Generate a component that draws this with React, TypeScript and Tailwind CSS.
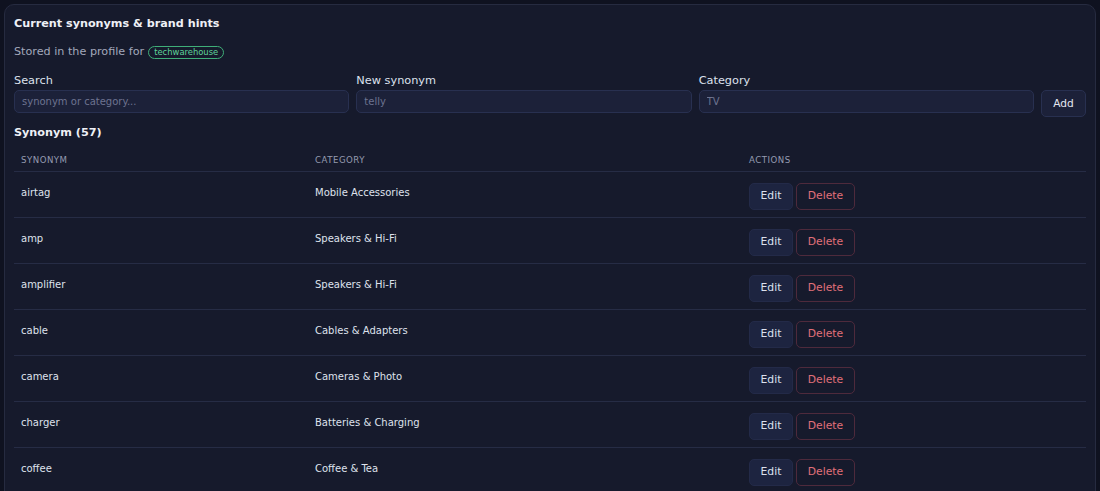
import React from "react";

const rows: [string, string][] = [
  ["airtag", "Mobile Accessories"],
  ["amp", "Speakers & Hi-Fi"],
  ["amplifier", "Speakers & Hi-Fi"],
  ["cable", "Cables & Adapters"],
  ["camera", "Cameras & Photo"],
  ["charger", "Batteries & Charging"],
  ["coffee", "Coffee & Tea"],
];

export default function App() {
  return (
    <div
      className="min-h-screen bg-[#0f1220] p-[4px] text-[#e3e6ef]"
      style={{ fontFamily: '"DejaVu Sans", "Liberation Sans", sans-serif' }}
    >
      <div className="rounded-[10px] border border-[#262b40] bg-[#161a2c] px-[9px] pt-[11px] pb-4">
        <h2 className="text-[11.2px] font-bold leading-[16px] text-[#eef0f6]">
          Current synonyms &amp; brand hints
        </h2>
        <div className="mt-[12px] flex items-center text-[11.2px] leading-[16px] text-[#a3a8bb]">
          <span>Stored in the profile for</span>
          <span className="ml-[4px] rounded-full border border-[#3fae78] px-[5px] text-[8.4px] leading-[11px] text-[#5fd39a]">
            techwarehouse
          </span>
        </div>
        <div className="mt-[13px] flex items-end gap-[7px]">
          <div className="flex flex-1 flex-col">
            <label className="text-[11.3px] leading-[16px] text-[#dde1ec]">Search</label>
            <input
              className="mt-[1px] h-[23px] rounded-[5px] border border-[#283050] bg-[#1c2139] px-[7px] text-[10px] text-[#c9cedd] placeholder-[#6d7390] outline-none"
              placeholder="synonym or category..."
            />
          </div>
          <div className="flex flex-1 flex-col">
            <label className="text-[11.3px] leading-[16px] text-[#dde1ec]">New synonym</label>
            <input
              className="mt-[1px] h-[23px] rounded-[5px] border border-[#283050] bg-[#1c2139] px-[7px] text-[10px] text-[#c9cedd] placeholder-[#6d7390] outline-none"
              placeholder="telly"
            />
          </div>
          <div className="flex flex-1 flex-col">
            <label className="text-[11.3px] leading-[16px] text-[#dde1ec]">Category</label>
            <input
              className="mt-[1px] h-[23px] rounded-[5px] border border-[#283050] bg-[#1c2139] px-[7px] text-[10px] text-[#c9cedd] placeholder-[#6d7390] outline-none"
              placeholder="TV"
            />
          </div>
          <button className="mb-[-4px] h-[27px] w-[45px] rounded-[5px] border border-[#283050] bg-[#1c2139] text-[10.6px] text-[#e3e6ef]">
            Add
          </button>
        </div>
        <div className="mt-[12px] text-[11.2px] font-bold leading-[16px] text-[#eef0f6]">
          Synonym (57)
        </div>
        <table className="mt-[13px] w-full border-collapse text-[10px]">
          <thead>
            <tr className="border-b border-[#262c45]">
              <th className="w-[294px] px-[7px] pb-[5px] text-left text-[8.6px] font-normal uppercase leading-[12px] tracking-[0.5px] text-[#959bb0]">
                Synonym
              </th>
              <th className="w-[434px] px-[7px] pb-[5px] text-left text-[8.6px] font-normal uppercase leading-[12px] tracking-[0.5px] text-[#959bb0]">
                Category
              </th>
              <th className="px-[7px] pb-[5px] text-left text-[8.6px] font-normal uppercase leading-[12px] tracking-[0.5px] text-[#959bb0]">
                Actions
              </th>
            </tr>
          </thead>
          <tbody>
            {rows.map(([s, c]) => (
              <tr key={s} className="border-b border-[#262c45]">
                <td className="px-[7px] pt-[13px] pb-[5px] align-top leading-[16px] text-[#dfe2ec]">{s}</td>
                <td className="px-[7px] pt-[13px] pb-[5px] align-top leading-[16px] text-[#dfe2ec]">{c}</td>
                <td className="px-[7px] pt-[11px] pb-[7px] align-top">
                  <div className="flex gap-[3px]">
                    <button className="h-[27px] w-[44px] rounded-[5px] border border-[#232a48] bg-[#1d2440] text-[10.8px] text-[#dbe0ee]">
                      Edit
                    </button>
                    <button className="h-[27px] w-[59px] rounded-[5px] border border-[#4e2a3c] bg-transparent text-[10.8px] text-[#e0707a]">
                      Delete
                    </button>
                  </div>
                </td>
              </tr>
            ))}
          </tbody>
        </table>
      </div>
    </div>
  );
}
